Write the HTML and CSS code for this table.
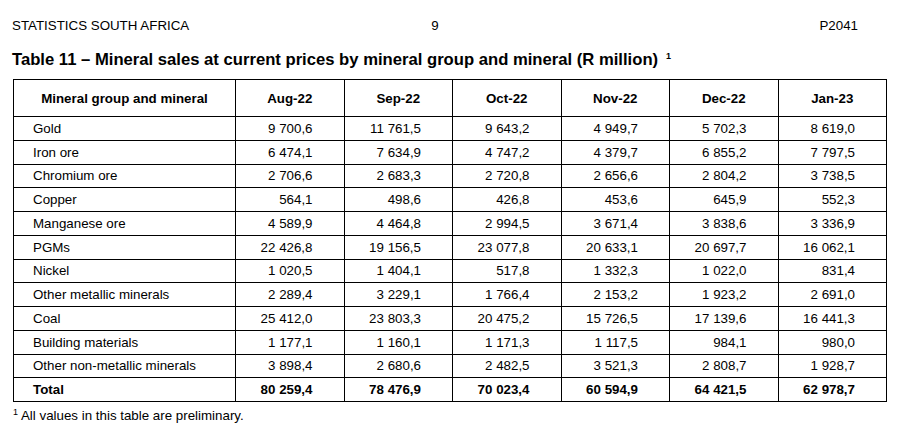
FILE: index.html
```html
<!DOCTYPE html>
<html lang="en">
<head>
<meta charset="utf-8">
<title>Table 11</title>
<link rel="stylesheet" href="styles.css">
</head>
<body>
<div class="page">
  <header class="running-head">
    <span class="rh-left">STATISTICS SOUTH AFRICA</span>
    <span class="rh-mid">9</span>
    <span class="rh-right">P2041</span>
  </header>
  <h1 class="title">Table 11 – Mineral sales at current prices by mineral group and mineral (R million)<sup class="title-note">1</sup></h1>
  <table class="data">
    <colgroup>
      <col class="c-label">
      <col class="c-num"><col class="c-num"><col class="c-num"><col class="c-num"><col class="c-num"><col class="c-num">
    </colgroup>
    <thead>
      <tr>
        <th>Mineral group and mineral</th>
        <th>Aug-22</th><th>Sep-22</th><th>Oct-22</th><th>Nov-22</th><th>Dec-22</th><th>Jan-23</th>
      </tr>
    </thead>
    <tbody>
      <tr><td>Gold</td><td>9 700,6</td><td>11 761,5</td><td>9 643,2</td><td>4 949,7</td><td>5 702,3</td><td>8 619,0</td></tr>
      <tr><td>Iron ore</td><td>6 474,1</td><td>7 634,9</td><td>4 747,2</td><td>4 379,7</td><td>6 855,2</td><td>7 797,5</td></tr>
      <tr><td>Chromium ore</td><td>2 706,6</td><td>2 683,3</td><td>2 720,8</td><td>2 656,6</td><td>2 804,2</td><td>3 738,5</td></tr>
      <tr><td>Copper</td><td>564,1</td><td>498,6</td><td>426,8</td><td>453,6</td><td>645,9</td><td>552,3</td></tr>
      <tr><td>Manganese ore</td><td>4 589,9</td><td>4 464,8</td><td>2 994,5</td><td>3 671,4</td><td>3 838,6</td><td>3 336,9</td></tr>
      <tr><td>PGMs</td><td>22 426,8</td><td>19 156,5</td><td>23 077,8</td><td>20 633,1</td><td>20 697,7</td><td>16 062,1</td></tr>
      <tr><td>Nickel</td><td>1 020,5</td><td>1 404,1</td><td>517,8</td><td>1 332,3</td><td>1 022,0</td><td>831,4</td></tr>
      <tr><td>Other metallic minerals</td><td>2 289,4</td><td>3 229,1</td><td>1 766,4</td><td>2 153,2</td><td>1 923,2</td><td>2 691,0</td></tr>
      <tr><td>Coal</td><td>25 412,0</td><td>23 803,3</td><td>20 475,2</td><td>15 726,5</td><td>17 139,6</td><td>16 441,3</td></tr>
      <tr><td>Building materials</td><td>1 177,1</td><td>1 160,1</td><td>1 171,3</td><td>1 117,5</td><td>984,1</td><td>980,0</td></tr>
      <tr><td>Other non-metallic minerals</td><td>3 898,4</td><td>2 680,6</td><td>2 482,5</td><td>3 521,3</td><td>2 808,7</td><td>1 928,7</td></tr>
      <tr class="total"><td>Total</td><td>80 259,4</td><td>78 476,9</td><td>70 023,4</td><td>60 594,9</td><td>64 421,5</td><td>62 978,7</td></tr>
    </tbody>
  </table>
  <p class="footnote"><sup class="fn-mark">1</sup> All values in this table are preliminary.</p>
</div>
</body>
</html>
```
FILE: styles.css
```css
html, body {
  margin: 0;
  padding: 0;
  background: #fff;
}
body {
  font-family: "Liberation Sans", Arial, sans-serif;
  color: #000;
  font-size: 13.33px;
}
.page {
  padding: 18.6px 0 0 12px;
}
.running-head {
  display: grid;
  grid-template-columns: 1fr auto 1fr;
  width: 846px;
  line-height: 14.9px;
}
.rh-mid { text-align: center; }
.rh-right { text-align: right; }
.title {
  margin: 17px 0 0 0;
  font-size: 16.65px;
  font-weight: bold;
  line-height: 18.6px;
}
.title-note {
  font-size: 9px;
  margin-left: 8px;
  vertical-align: 6px;
  line-height: 0;
}
.data {
  margin: 10px 0 0 1px;
  border-collapse: collapse;
  width: 874px;
  table-layout: fixed;
}
.c-label { width: 222px; }
.data th, .data td {
  border: 1px solid #000;
  padding: 0;
}
.data th {
  height: 36px;
  font-weight: bold;
  text-align: center;
}
.data td {
  height: 22.75px;
  text-align: right;
  padding-right: 31px;
  line-height: 15px;
}
.data td:first-child {
  text-align: left;
  padding-left: 19px;
  padding-right: 0;
}
.total td { font-weight: bold; }
.footnote {
  margin: 6.5px 0 0 1px;
  font-size: 13.33px;
  line-height: 14.9px;
}
.fn-mark {
  font-size: 9px;
  vertical-align: 5px;
  line-height: 0;
}
```
